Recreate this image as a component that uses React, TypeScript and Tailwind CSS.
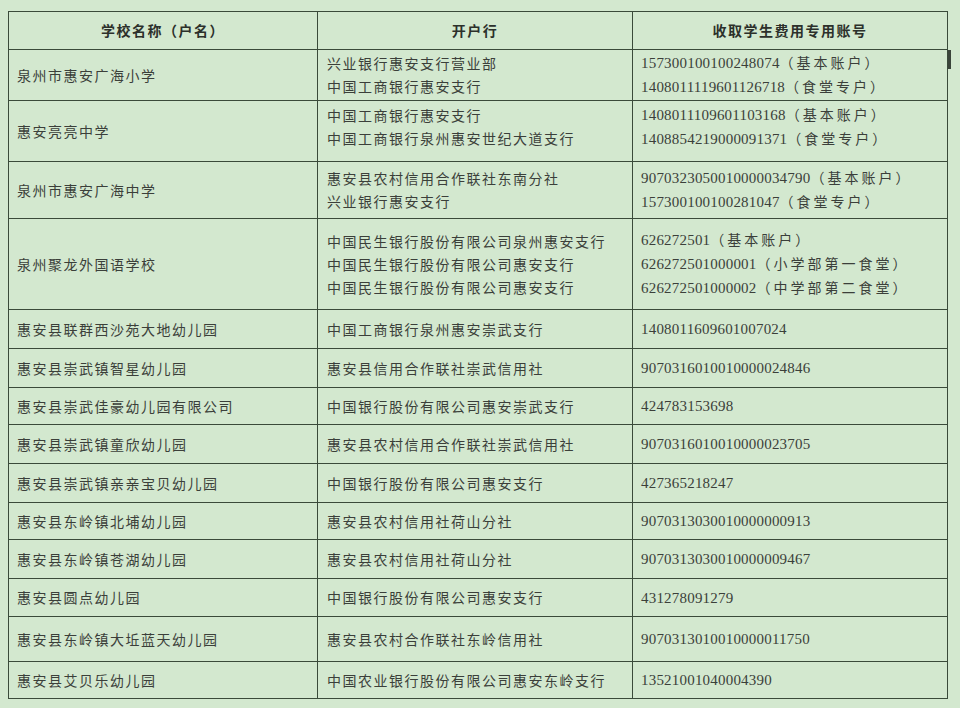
const rows: { name: string; banks: string[]; accounts: string[]; h: string }[] = [
  {
    name: "泉州市惠安广海小学",
    banks: ["兴业银行惠安支行营业部", "中国工商银行惠安支行"],
    accounts: ["157300100100248074（基本账户）", "1408011119601126718（食堂专户）"],
    h: "h-[51px]",
  },
  {
    name: "惠安亮亮中学",
    banks: ["中国工商银行惠安支行", "中国工商银行泉州惠安世纪大道支行"],
    accounts: ["1408011109601103168（基本账户）", "1408854219000091371（食堂专户）"],
    h: "h-[61px]",
  },
  {
    name: "泉州市惠安广海中学",
    banks: ["惠安县农村信用合作联社东南分社", "兴业银行惠安支行"],
    accounts: ["9070323050010000034790（基本账户）", "157300100100281047（食堂专户）"],
    h: "h-[57px]",
  },
  {
    name: "泉州聚龙外国语学校",
    banks: [
      "中国民生银行股份有限公司泉州惠安支行",
      "中国民生银行股份有限公司惠安支行",
      "中国民生银行股份有限公司惠安支行",
    ],
    accounts: ["626272501（基本账户）", "626272501000001（小学部第一食堂）", "626272501000002（中学部第二食堂）"],
    h: "h-[91px]",
  },
  { name: "惠安县联群西沙苑大地幼儿园", banks: ["中国工商银行泉州惠安崇武支行"], accounts: ["1408011609601007024"], h: "h-[39px]" },
  { name: "惠安县崇武镇智星幼儿园", banks: ["惠安县信用合作联社崇武信用社"], accounts: ["9070316010010000024846"], h: "h-[39px]" },
  { name: "惠安县崇武佳豪幼儿园有限公司", banks: ["中国银行股份有限公司惠安崇武支行"], accounts: ["424783153698"], h: "h-[37px]" },
  { name: "惠安县崇武镇童欣幼儿园", banks: ["惠安县农村信用合作联社崇武信用社"], accounts: ["9070316010010000023705"], h: "h-[39px]" },
  { name: "惠安县崇武镇亲亲宝贝幼儿园", banks: ["中国银行股份有限公司惠安支行"], accounts: ["427365218247"], h: "h-[39px]" },
  { name: "惠安县东岭镇北埔幼儿园", banks: ["惠安县农村信用社荷山分社"], accounts: ["9070313030010000000913"], h: "h-[37px]" },
  { name: "惠安县东岭镇苍湖幼儿园", banks: ["惠安县农村信用社荷山分社"], accounts: ["9070313030010000009467"], h: "h-[39px]" },
  { name: "惠安县圆点幼儿园", banks: ["中国银行股份有限公司惠安支行"], accounts: ["431278091279"], h: "h-[38px]" },
  { name: "惠安县东岭镇大坵蓝天幼儿园", banks: ["惠安县农村合作联社东岭信用社"], accounts: ["9070313010010000011750"], h: "h-[45px]" },
  { name: "惠安县艾贝乐幼儿园", banks: ["中国农业银行股份有限公司惠安东岭支行"], accounts: ["13521001040004390"], h: "h-[37px]" },
];

const cjk = "font-['Noto_Sans_CJK_SC',sans-serif]";

// digits in a Times-like face, the bracketed note in CJK with wider spacing
function Account({ text }: { text: string }) {
  const i = text.indexOf("（");
  const num = i >= 0 ? text.slice(0, i) : text;
  const note = i >= 0 ? text.slice(i) : "";
  return (
    <div className="leading-[23px] whitespace-nowrap">
      <span className="font-['Liberation_Serif',serif] text-[15px] tracking-[0.2px]">{num}</span>
      {note && <span className={`${cjk} text-[14px] tracking-[3px]`}>{note}</span>}
    </div>
  );
}

export default function App() {
  return (
    <div className="w-[960px] h-[708px] bg-[#d3e8cf] pt-[11px] pl-[8px] overflow-hidden text-[#3b3f3a]">
      <table className="border-collapse w-[939px] table-fixed">
        <colgroup>
          <col className="w-[309px]" />
          <col className="w-[315px]" />
          <col className="w-[315px]" />
        </colgroup>
        <thead>
          <tr className="h-[38px]">
            {["学校名称（户名）", "开户行", "收取学生费用专用账号"].map((t) => (
              <th
                key={t}
                className={`border border-[#3a4a3a] ${cjk} font-bold text-[14px] tracking-[1.5px] text-[#2c302b] text-center align-middle`}
              >
                {t}
              </th>
            ))}
          </tr>
        </thead>
        <tbody>
          {rows.map((r, idx) => (
            <tr key={idx} className={r.h}>
              <td className={`border border-[#3a4a3a] pl-[8px] ${cjk} text-[14px] tracking-[1.5px] align-middle`}>
                {r.name}
              </td>
              <td className={`border border-[#3a4a3a] pl-[9px] ${cjk} text-[14px] tracking-[1.5px] align-middle ${idx === 1 ? "pb-[8px]" : ""}`}>
                {r.banks.map((b, j) => (
                  <div key={j} className="leading-[23px] whitespace-nowrap">{b}</div>
                ))}
              </td>
              <td className={`relative border border-[#3a4a3a] pl-[8px] align-middle ${idx === 1 ? "pb-[8px]" : ""}`}>
                {r.accounts.map((a, j) => (
                  <Account key={j} text={a} />
                ))}
                {idx === 0 && <div className="absolute right-[-4px] top-0 w-[3px] h-[19px] bg-[#3a443a]" />}
              </td>
            </tr>
          ))}
        </tbody>
      </table>
    </div>
  );
}
